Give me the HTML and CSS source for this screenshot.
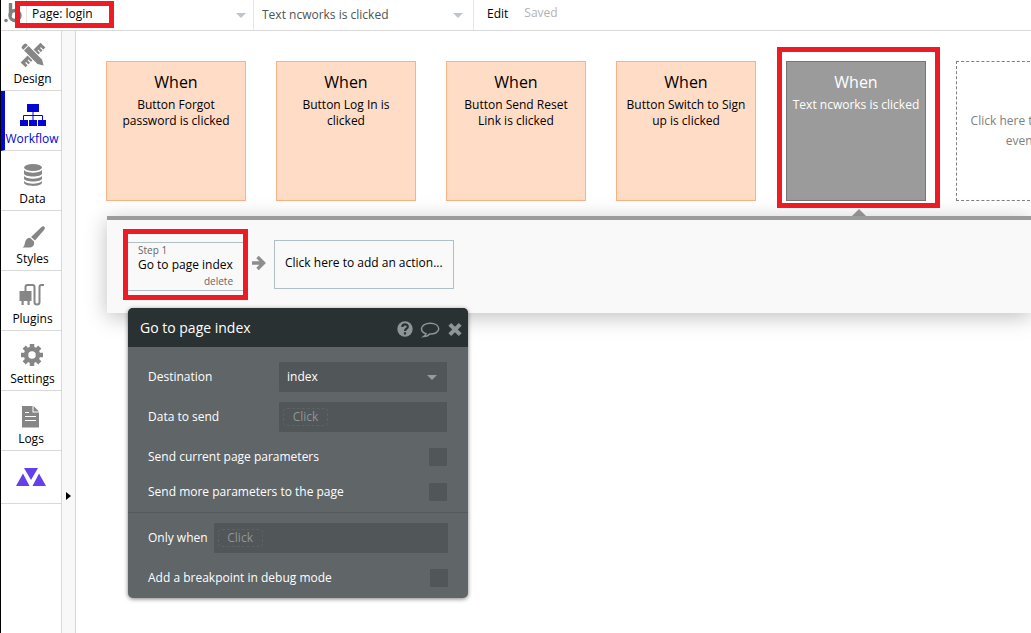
FILE: index.html
```html
<!DOCTYPE html>
<html lang="en">
<head>
<meta charset="utf-8">
<title>Workflow editor</title>
<link rel="stylesheet" href="styles.css">
</head>
<body>
<header class="topbar">
  <svg class="logo" viewBox="0 0 22 30" aria-label="Bubble"><circle cx="5" cy="20.500" r="1.800" fill="#808080"/><path d="M9.500 3v12.500" stroke="#808080" stroke-width="3.400" fill="none"/><circle cx="14" cy="15.500" r="5" stroke="#808080" stroke-width="3.400" fill="none"/></svg>
  <div class="picker picker-page">
    <select aria-label="Page"><option>Page: login</option></select>
    <span class="highlight"></span>
  </div>
  <div class="picker picker-event">
    <select aria-label="Event"><option>Text ncworks is clicked</option></select>
  </div>
  <button class="edit">Edit</button>
  <span class="saved">Saved</span>
</header>
<div class="workspace">
  <nav class="sidebar">
    <a class="tab" href="#design">
      <svg viewBox="0 0 30 30"><g transform="translate(15 14) rotate(45)"><path d="M-3.500-14h7v28h-7z"/><path stroke="#fff" stroke-width="1.200" d="M0-10.500h4M0-7h4M0 7h4M0 10.500h4"/></g><g transform="translate(15 14) rotate(-45)"><path fill="#fff" d="M-4.200-7h8.400V7h-8.400z"/><path d="M-3.200-12q0-2 2-2h2.400q2 0 2 2v1.500h-6.400zM-3.200-9.500h6.400V9.500L0 15l-3.200-5.500z"/></g></svg>
      <span>Design</span>
    </a>
    <a class="tab active" href="#workflow">
      <svg viewBox="0 0 30 30"><path d="M9 3h12v8H9zM2 19h8v6H2zM11 19h8v6h-8zM20 19h8v6h-8z"/><path fill="none" stroke="currentColor" d="M15 11v8M5.500 19v-4.500h19V19"/></svg>
      <span>Workflow</span>
    </a>
    <a class="tab" href="#data">
      <svg viewBox="0 0 30 30"><ellipse cx="15" cy="6.500" rx="9" ry="3.500"/><path d="M6 9c3 3.500 15 3.500 18 0v3.500c0 4-18 4-18 0zM6 15c3 3.500 15 3.500 18 0v2.500c0 4-18 4-18 0zM6 20c3 3.500 15 3.500 18 0v1.500c0 4.500-18 4.500-18 0z"/></svg>
      <span>Data</span>
    </a>
    <a class="tab" href="#styles">
      <svg viewBox="0 0 30 30"><path d="M26 5.500c1.500 1 .8 2.500 0 3.500L17 19.500 13 16 23 6.500c1-1 2-1.500 3-1zM12 16.800l4 3.700c1 4-2 6-5 6H4.500c2-1 2-3 2.500-5 .6-3 2.500-4.700 5-4.700z"/></svg>
      <span>Styles</span>
    </a>
    <a class="tab" href="#plugins">
      <svg viewBox="0 0 30 30"><path d="M1.500 10h12v10h-12zM3.500 20h2.200v4H3.500zM9.500 20h2.200v4H9.500z"/><path fill="none" stroke="currentColor" stroke-width="2" d="M7.500 10V6q0-2 2-2h5q2 0 2 2v15q0 2.500 2.500 2.500t2.500-2.500V6q0-2 2-2H26"/></svg>
      <span>Plugins</span>
    </a>
    <a class="tab" href="#settings">
      <svg viewBox="0 0 30 30"><circle cx="14" cy="14" r="6" fill="none" stroke="currentColor" stroke-width="4.500"/><g stroke="currentColor" stroke-width="4.500"><path d="M14 3v4M14 21v4M3 14h4M21 14h4M6.200 6.200L9 9M19 19l2.800 2.800M21.800 6.200L19 9M9 19l-2.800 2.800"/></g></svg>
      <span>Settings</span>
    </a>
    <a class="tab logs" href="#logs">
      <svg viewBox="0 0 30 30"><path d="M6 5h10.500v6.500H23V26.500H6zM17.500 5L23 10.500h-5.500z"/><path stroke="#fff" stroke-width="1.200" d="M9 11.500h4M9 15.500h11M9 19.500h11"/></svg>
      <span>Logs</span>
    </a>
    <a class="tab brand" href="#more" aria-label="More">
      <svg viewBox="0 0 30 30"><path d="M8 6h14l-7 12zM7 11.500L13.500 24H0zM23 11.500L30 24H16.500z"/></svg>
    </a>
  </nav>
  <div class="gutter"><button class="expand" aria-label="Expand"></button></div>
  <main class="canvas">
    <section class="events">
      <button class="event"><strong>When</strong><span>Button Forgot password is clicked</span></button>
      <button class="event"><strong>When</strong><span>Button Log In is clicked</span></button>
      <button class="event"><strong>When</strong><span>Button Send Reset Link is clicked</span></button>
      <button class="event"><strong>When</strong><span>Button Switch to Sign up is clicked</span></button>
      <div class="selected"><button class="event current"><strong>When</strong><span>Text ncworks is clicked</span></button><span class="highlight"></span></div>
      <button class="event new">Click here to add an event...</button>
    </section>
    <section class="actions">
      <div class="step">
        <small>Step 1</small>
        <span>Go to page index</span>
        <button class="delete">delete</button>
        <span class="highlight"></span>
      </div>
      <svg class="arrow" viewBox="0 0 16 16"><path fill="none" stroke="#8d8d8d" stroke-width="3.400" d="M1 8h11M6.500 2l6 6-6 6"/></svg>
      <button class="add">Click here to add an action...</button>

      <form class="editor">
        <div class="editor-head">
          <h2>Go to page index</h2>
          <button type="button" aria-label="Help"><svg viewBox="0 0 20 20"><circle cx="10" cy="10" r="7.700" fill="#8c9696"/><path fill="none" stroke="#293133" stroke-width="2.200" d="M7.300 8c0-3.500 5.500-3.300 5.500-.3 0 2-2.800 1.800-2.800 4.300M10 13.300v2.200"/></svg></button>
          <button type="button" aria-label="Comment"><svg viewBox="0 0 20 20"><path fill="none" stroke="#8c9696" stroke-width="1.500" d="M6 14.800C3.500 14 1.500 12 1.500 9.800c0-3.300 3.800-5.500 8.700-5.500s8.500 2.200 8.500 5.500-4 5.500-9 5.300c-1.700 1.600-3.700 2.400-6 2.500 1.300-.8 2-1.700 2.300-2.800z"/></svg></button>
          <button type="button" aria-label="Close"><svg viewBox="0 0 20 20"><path stroke="#8c9696" stroke-width="4" d="M4.800 5.300l10.400 10.400M15.200 5.300L4.800 15.700"/></svg></button>
        </div>
        <div class="editor-body">
          <div class="row">
            <label for="destination">Destination</label>
            <div class="picker field"><select id="destination"><option>index</option></select></div>
          </div>
          <div class="row">
            <span id="data-label">Data to send</span>
            <div class="field"><button type="button" class="chip" aria-labelledby="data-label">Click</button></div>
          </div>
          <div class="row"><label for="current">Send current page parameters</label><input type="checkbox" id="current"></div>
          <div class="row tight"><label for="more">Send more parameters to the page</label><input type="checkbox" id="more"></div>
        </div>
        <div class="editor-body conditions">
          <div class="row only">
            <span id="when-label">Only when</span>
            <div class="field"><button type="button" class="chip" aria-labelledby="when-label">Click</button></div>
          </div>
          <div class="row"><label for="breakpoint">Add a breakpoint in debug mode</label><input type="checkbox" id="breakpoint"></div>
        </div>
      </form>
    </section>
  </main>
</div>
</body>
</html>
```
FILE: styles.css
```css
* { box-sizing: border-box; }
body {
  margin: 0;
  min-height: 100vh;
  display: flex;
  flex-direction: column;
  border-left: 1px solid #000;
  background: #fff;
  color: #000;
  font: 12px/16px "Open Sans", sans-serif;
  overflow: hidden;
}
button, select, input { font: inherit; color: inherit; margin: 0; }
button { padding: 0; border: 0; background: none; cursor: pointer; }
a { color: inherit; text-decoration: none; }

.highlight {
  position: absolute;
  border: 5px solid #ed1c24;
  pointer-events: none;
  z-index: 2;
}

.topbar { display: flex; height: 31px; border-bottom: 1px solid #d9d9d9; }
.logo { width: 22px; height: 30px; margin-right: 3px; }
.picker { position: relative; display: flex; }
.picker select {
  width: 100%;
  border: 0;
  padding: 0 24px 0 8px;
  background: none;
  appearance: none;
}
.picker::after {
  content: "";
  position: absolute;
  right: 10px;
  top: 50%;
  margin-top: -2px;
  border: 5px solid transparent;
  border-top-color: #bcc6cf;
  border-bottom: 0;
  pointer-events: none;
}
.picker-page, .picker-event { border-left: 1px solid #e6e6e6; }
.picker-page { width: 227px; }
.picker-page select { padding: 0 24px 3px 5px; }
.picker-page::after { right: 7px; }
.picker-page .highlight { left: -12px; top: 1px; width: 99px; height: 27px; }
.picker-event { width: 221px; border-right: 1px solid #e6e6e6; color: #4d5357; }
.edit { margin: 0 16px 3px 13px; }
.saved { padding-top: 5px; color: #b3b3b3; }

.workspace { display: flex; flex: 1; }
.sidebar { flex: none; width: 61px; border-right: 1px solid #d9d9d9; }
.tab {
  display: flex;
  flex-direction: column;
  align-items: center;
  height: 60px;
  padding: 10px 0 0 3px;
  border-bottom: 1px solid #d9d9d9;
}
.tab svg { width: 30px; height: 30px; color: #868686; fill: currentColor; }
.tab.logs { padding-left: 0; }
.tab.active { padding-left: 0; border-left: 4px solid #0205d3; color: #0205d3; }
.tab.active span { margin-left: -2px; }
.tab.active svg { color: #0205d3; }
.tab.brand { height: 53px; padding-top: 11px; padding-left: 0; }
.tab.brand svg { color: #6440ed; }
.gutter {
  flex: none;
  width: 14px;
  padding: 461px 0 0 4px;
  border-right: 1px solid #d9d9d9;
  background: #f8f8f8;
}
.expand { display: block; border: 4px solid transparent; border-left: 5px solid #000; border-right: 0; }

.canvas { flex: 1; min-width: 0; padding: 30px 0 0 30px; overflow: hidden; }
.events { display: flex; gap: 30px; }
.event {
  flex: none;
  display: flex;
  flex-direction: column;
  align-items: center;
  width: 140px;
  height: 140px;
  padding: 10px 4px;
  border: 1px solid #f8b283;
  background: #ffdcc6;
}
.event > span { padding: 0 4px; }
.event strong { margin-bottom: 5px; font-size: 16px; font-weight: 400; line-height: 20px; }
.selected { position: relative; flex: none; }
.selected::after {
  content: "";
  position: absolute;
  left: 66px;
  top: 148px;
  border: 7px solid transparent;
  border-bottom-color: #9b9b9b;
  border-top: 0;
}
.selected .highlight { left: -9px; top: -14px; width: 163px; height: 161px; }
.event.current { border-color: #757575; background: #9b9b9b; color: #fff; }
.event.current > span { padding: 0; }
.event.new {
  display: block;
  padding: 0 12px;
  border: 1px dashed #808080;
  background: none;
  color: #808080;
  line-height: 20px;
}

.actions {
  position: relative;
  display: flex;
  align-items: flex-start;
  margin: 15px 0 0 1px;
  padding: 20px 16px 22px 21px;
  border-top: 4px solid #9b9b9b;
  background: #f9f9f9;
  box-shadow: 0 4px 20px rgba(0, 0, 0, .25);
}
.step {
  position: relative;
  display: flex;
  flex-direction: column;
  width: 115px;
  margin-top: 2px;
  padding: 0 10px;
  border: solid #b0bec5;
  border-width: 1px 0;
  white-space: nowrap;
}
.step small, .delete { color: #666; font-size: 10px; }
.step small { line-height: 14px; }
.step > span { line-height: 15px; }
.delete { align-self: flex-end; line-height: 18px; }
.step .highlight { left: -5px; top: -14px; width: 125px; height: 71px; }
.arrow { width: 16px; height: 16px; margin: 15px 7px 0 8px; }
.add { height: 49px; padding: 0 10px 3px; border: 1px solid #b0bec5; }

.editor {
  position: absolute;
  left: 21px;
  top: 88px;
  width: 340px;
  border-radius: 5px;
  background: #606568;
  color: #fff;
  box-shadow: 0 1px 4px rgba(0, 0, 0, .5);
}
.editor-head {
  display: flex;
  align-items: center;
  gap: 5px;
  height: 39px;
  padding: 0 3px 0 12px;
  border-radius: 5px 5px 0 0;
  background: #293133;
}
.editor-head h2 { flex: 1; margin: 0; font-size: 14px; font-weight: 400; }
.editor-head svg { display: block; width: 20px; height: 20px; margin-top: 3px; }
.editor-body { display: flex; flex-direction: column; gap: 10px; padding: 15px 21px 5px 20px; }
.conditions { padding: 10px 20px 5px; border-top: 1px solid #55595c; }
.row { display: flex; align-items: center; justify-content: space-between; height: 30px; }
.row.tight { margin-top: -5px; }
.field { width: 168px; height: 30px; border-radius: 1px; background: #515659; }
.field.picker::after { border-top-color: #969b9d; }
.only { gap: 6px; }
.only .field { flex: 1; }
.chip {
  display: block;
  width: 45px;
  height: 18px;
  margin: 6px 4px;
  border: 1px dashed #5d6265;
  border-radius: 4px;
  color: #919597;
  line-height: 16px;
}
input[type="checkbox"] {
  appearance: none;
  width: 18px;
  height: 18px;
  border-radius: 1px;
  background: #515659;
}
```
